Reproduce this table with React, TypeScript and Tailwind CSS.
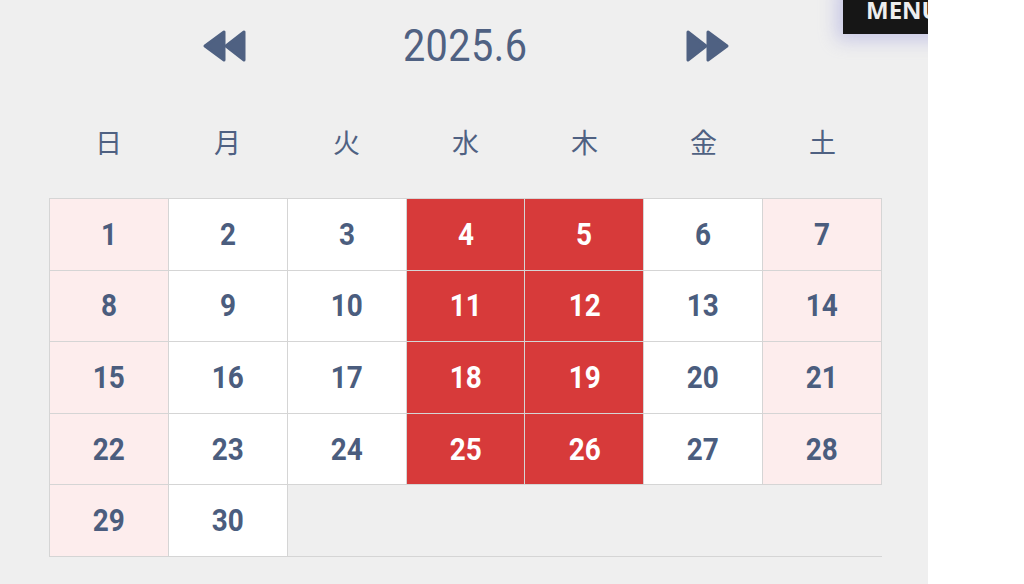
const weekdays = ["日", "月", "火", "水", "木", "金", "土"];
const busy = [4, 5, 11, 12, 18, 19, 25, 26];

const DoubleArrow = ({ dir }: { dir: "left" | "right" }) => (
  <svg width="46" height="34" viewBox="0 0 46 34" className={dir === "left" ? "" : "rotate-180"}>
    <g fill="#4f6182" stroke="#4f6182" strokeWidth="3" strokeLinejoin="round">
      <path d="M3 17 L22 3 L22 31 Z" />
      <path d="M24 17 L42 3 L42 31 Z" />
    </g>
  </svg>
);

const DayCell = ({ day, col }: { day: number; col: number }) => {
  const isBusy = busy.includes(day);
  const weekend = col === 0 || col === 6;
  const bg = isBusy ? "bg-[#d73a3a] text-white" : weekend ? "bg-[#fdeded] text-[#4b5d7e]" : "bg-white text-[#4b5d7e]";
  return (
    <div className={`h-[71.6px] flex items-center justify-center border-r border-b border-[#d5d5d5] ${bg}`}>
      <span className="text-[31px] font-bold leading-none scale-x-90 inline-block">{day}</span>
    </div>
  );
};

export default function App() {
  const days = Array.from({ length: 30 }, (_, i) => i + 1);
  return (
    <div className="w-[1024px] h-[584px] bg-white flex font-['Roboto',sans-serif]">
      <div className="relative w-[928px] h-full bg-[#efefef] overflow-hidden">
        <div className="absolute left-[843px] top-[-10px] h-[44px] w-[145px] bg-[#161616] shadow-[0_0_18px_6px_rgba(150,150,220,0.45)] flex items-end pb-[12px] pl-[23px]">
          <span className="text-[#eeeeee] font-bold text-[24px] leading-none font-['Open_Sans',sans-serif]">MENU</span>
        </div>

        <div className="ml-[49px] w-[833px]">
          <div className="grid grid-cols-7 h-[92px] items-center text-[#4f6182]">
            <div />
            <div className="flex justify-center -translate-x-[3px]">
              <DoubleArrow dir="left" />
            </div>
            <div />
            <div className="flex justify-center">
              <span className="text-[44px] leading-none scale-x-[0.9] inline-block tracking-[0.5px]">2025.6</span>
            </div>
            <div />
            <div className="flex justify-center translate-x-[3px]">
              <DoubleArrow dir="right" />
            </div>
            <div />
          </div>

          <div className="grid grid-cols-7 h-[106px] items-start pt-[36px] text-[#4f6182]">
            {weekdays.map((w) => (
              <div key={w} className="text-center text-[27px] font-normal leading-none font-['Noto_Sans_CJK_JP',sans-serif]">
                {w}
              </div>
            ))}
          </div>

          <div className="grid grid-cols-7 border-l border-t border-[#d5d5d5]">
            {days.map((d, i) => (
              <DayCell key={d} day={d} col={i % 7} />
            ))}
            <div className="col-span-5 border-b border-[#d5d5d5]" />
          </div>
        </div>
      </div>
    </div>
  );
}
